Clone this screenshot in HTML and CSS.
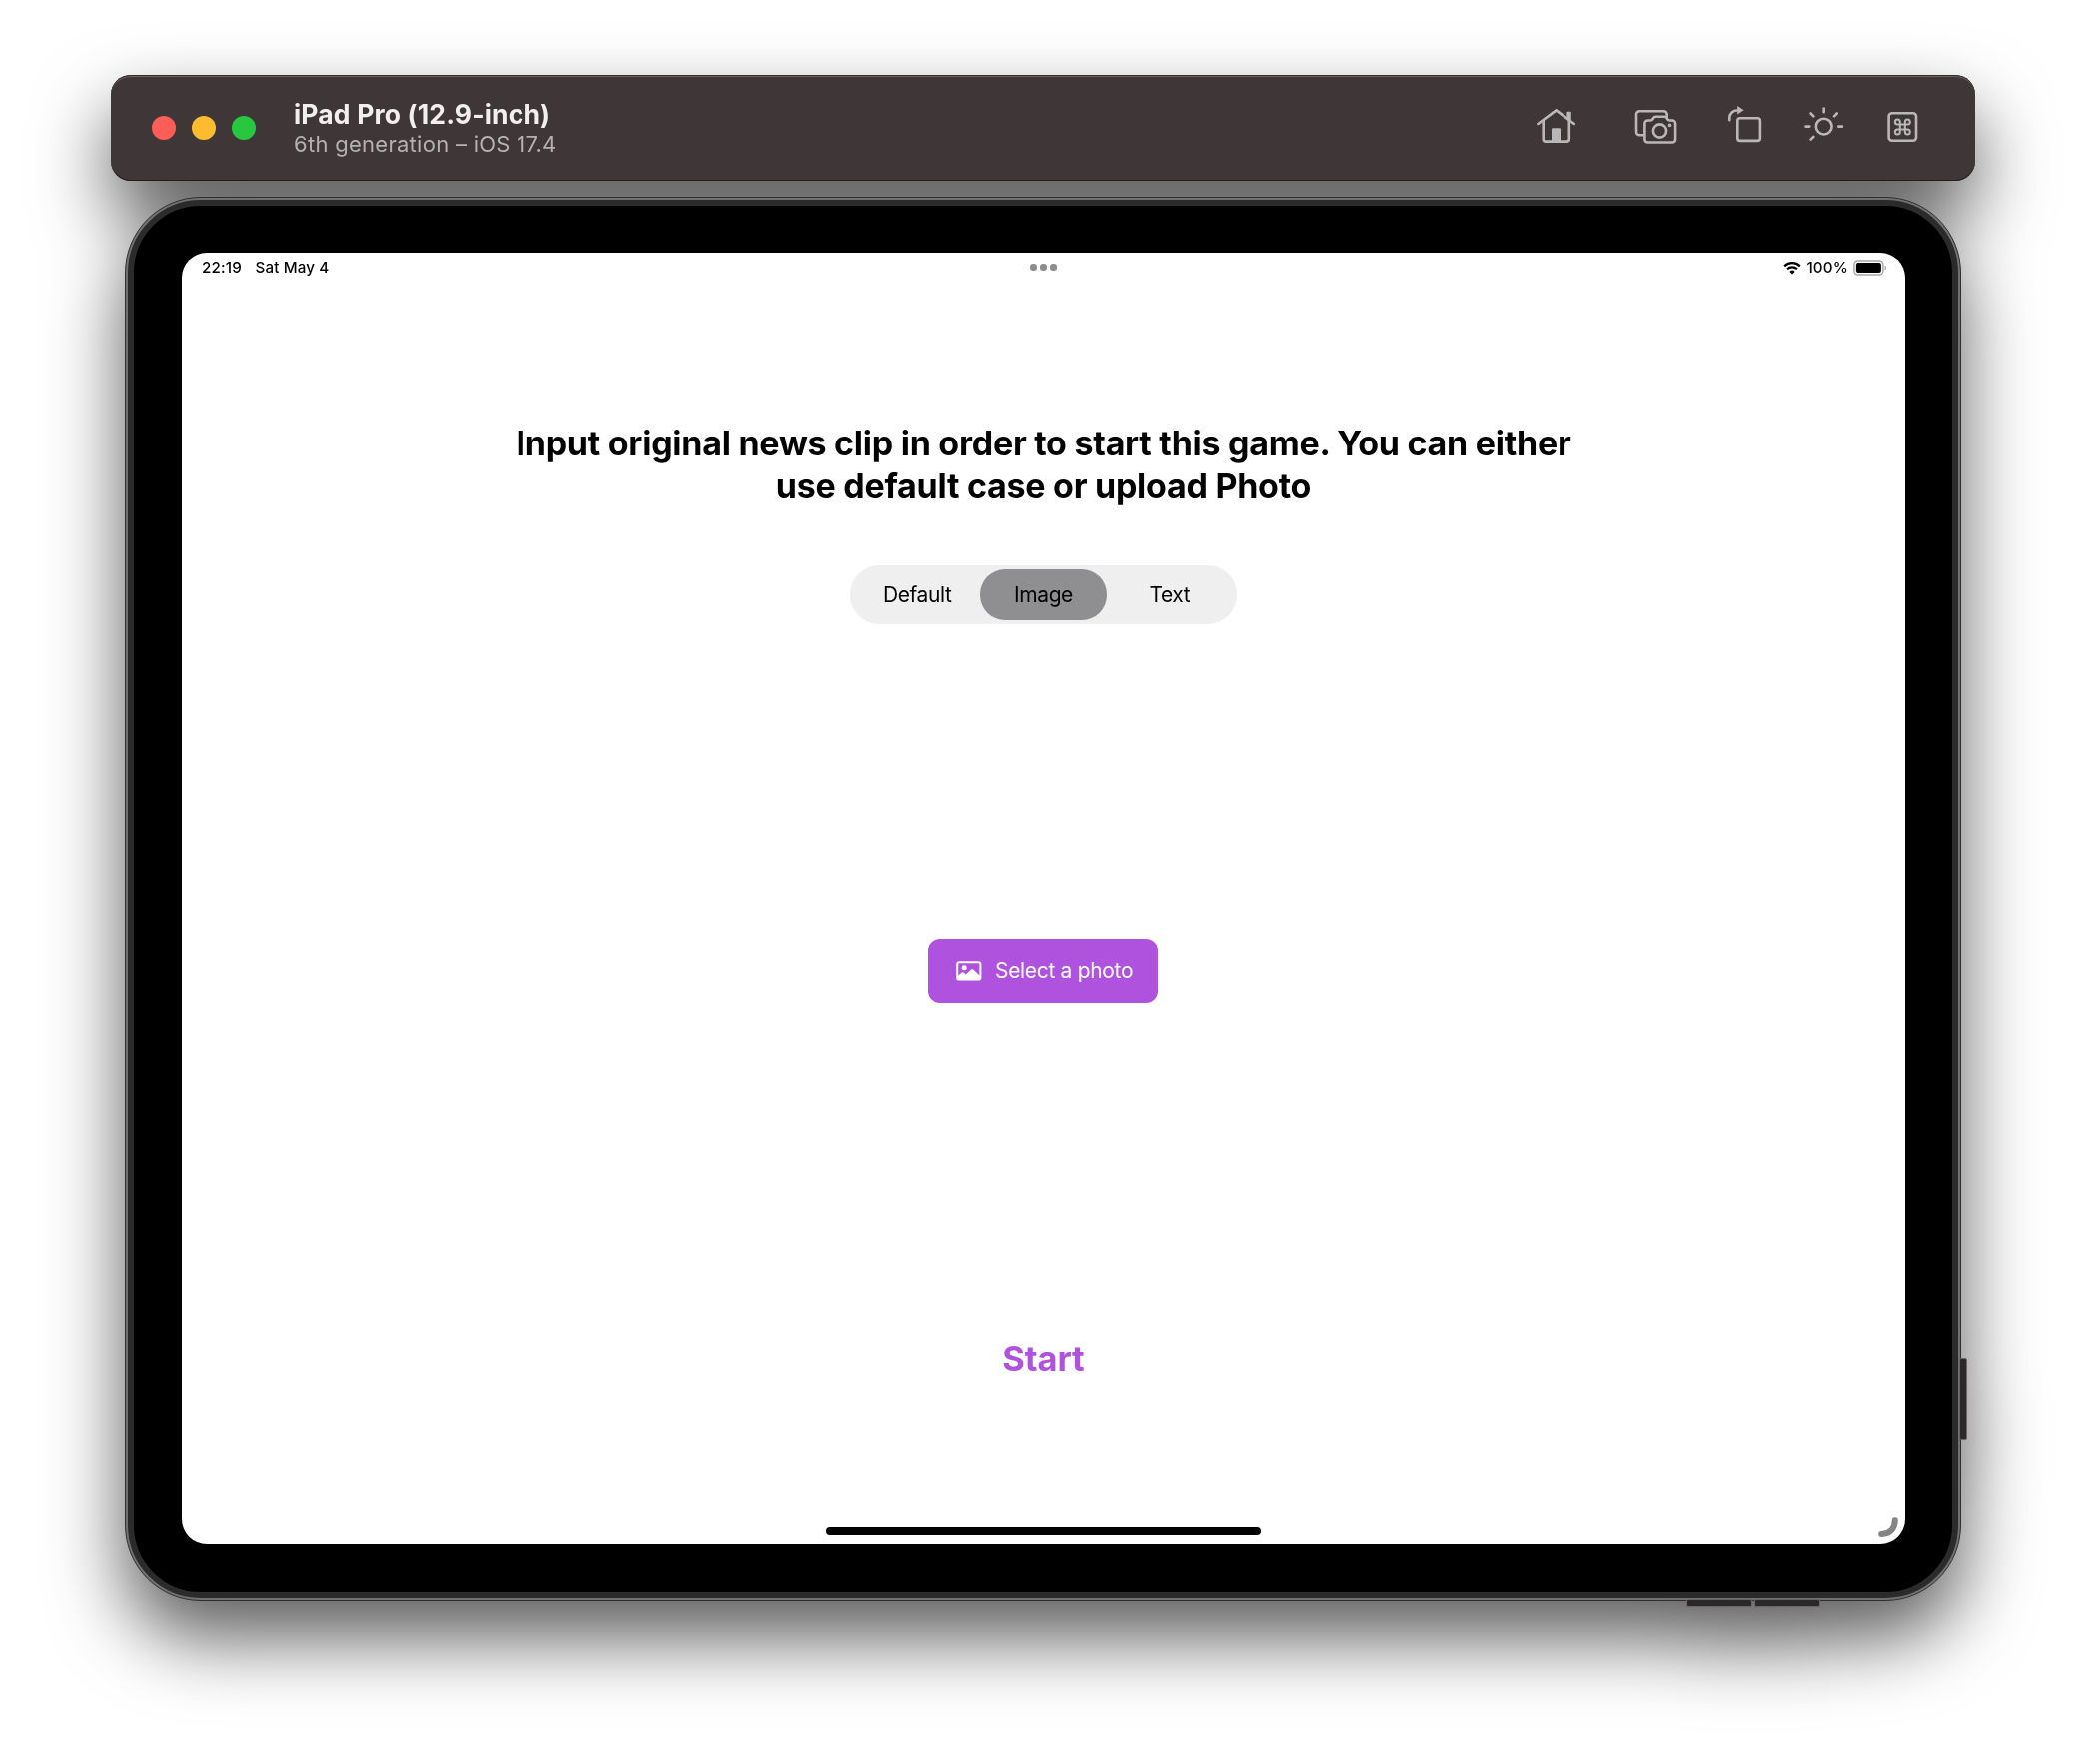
FILE: index.html
```html
<!DOCTYPE html>
<html lang="en">
<head>
<meta charset="utf-8">
<title>iPad Pro (12.9-inch)</title>
<link rel="stylesheet" href="styles.css">
</head>
<body>
<div class="simulator">
  <header class="toolbar">
    <div class="lights">
      <span class="light light-close"></span>
      <span class="light light-minimize"></span>
      <span class="light light-zoom"></span>
    </div>
    <div class="titles">
      <div class="title">iPad Pro (12.9-inch)</div>
      <div class="subtitle">6th generation – iOS 17.4</div>
    </div>
    <div class="actions">
      <svg class="icon icon-home" width="44" height="40" viewBox="0 0 44 40">
        <path d="M3.4 19 21.6 5.4 39.8 19" />
        <path d="M8.7 16v18.2a2.4 2.4 0 0 0 2.4 2.4h21.3a2.4 2.4 0 0 0 2.4-2.4V16" />
        <path class="solid" d="M17 24.2a1 1 0 0 1 1-1h7a1 1 0 0 1 1 1V37h-9zM32.4 7.7a.9.9 0 0 1 .9-.9h2.6a.9.9 0 0 1 .9.9V17l-4.4-3.3z" />
      </svg>
      <svg class="icon icon-camera" width="48" height="40" viewBox="0 0 48 40">
        <path d="M11 30.2H7.2a3.2 3.2 0 0 1-3.2-3.2V9.4A3.2 3.2 0 0 1 7.2 6.2h24.3a3.2 3.2 0 0 1 3.2 3.2v2.3" />
        <path d="M15.4 15.500h3c1 0 1.500-.4 2-1.200l.8-1.300c.5-.8 1-1.200 2-1.200h9.300c1 0 1.500.4 2 1.200l.8 1.300c.5.8 1 1.200 2 1.200h2.800a3 3 0 0 1 3 3v16a3 3 0 0 1-3 3H15.400a3 3 0 0 1-3-3v-16a3 3 0 0 1 3-3z" />
        <circle cx="27.500" cy="26" r="6.600" />
        <circle class="solid" cx="37.500" cy="20.400" r="1.800" />
      </svg>
      <svg class="icon icon-rotate" width="38" height="40" viewBox="0 0 38 40">
        <rect x="11.300" y="13.300" width="22.600" height="22.600" rx="2.600" />
        <path d="M3.300 15.200V13.500c0-5 3.300-8.200 8.500-8.200" />
        <path class="solid" d="M11.200 1 17.600 5.300 11.200 9.600z" />
      </svg>
      <svg class="icon icon-sun" width="44" height="40" viewBox="0 0 44 40">
        <circle cx="21.700" cy="21.600" r="7.900" />
        <path d="M21.700 3.500v3.800M3.500 21.600h3.800M36.200 21.600H40M8.600 8.500l2.800 2.800M34.800 8.500l-2.800 2.800M8.600 34.700l2.800-2.800" />
      </svg>
      <svg class="icon icon-command" width="36" height="40" viewBox="0 0 36 40">
        <rect x="4.600" y="8.300" width="27.400" height="27.400" rx="3.200" />
        <path class="fine" d="M20.800 17v10a2.500 2.500 0 1 0 2.500-2.500h-10a2.500 2.500 0 1 0 2.500 2.500V17a2.500 2.500 0 1 0-2.500 2.500h10a2.500 2.500 0 1 0-2.500-2.500z" />
      </svg>
    </div>
  </header>

  <div class="device">
    <span class="hw hw-power"></span>
    <span class="hw hw-volume-up"></span>
    <span class="hw hw-volume-down"></span>
    <div class="bezel">
      <main class="screen">
        <div class="status">
          <div class="status-left">
            <span class="clock">22:19</span>
            <span class="date">Sat May 4</span>
          </div>
          <div class="dots"><i></i><i></i><i></i></div>
          <div class="status-right">
            <svg class="wifi" width="18" height="14" viewBox="0 0 18 14">
              <path d="M1.200 5.300a11.200 11.200 0 0 1 15.600 0M4.100 8.300a7 7 0 0 1 9.800 0" />
              <path class="wifi-dot" d="M9 13.600 6.300 10.900a3.900 3.900 0 0 1 5.400 0z" />
            </svg>
            <span class="percent">100%</span>
            <svg class="battery" width="34" height="16" viewBox="0 0 34 16">
              <rect class="battery-case" x=".9" y=".9" width="29" height="14.200" rx="4" />
              <rect x="2.900" y="2.900" width="25" height="10.200" rx="2" />
              <path class="battery-tip" d="M31.600 5.400c1.900.7 1.900 4.500 0 5.200z" />
            </svg>
          </div>
        </div>

        <h1 class="headline">Input original news clip in order to start this game. You can either<br>use default case or upload Photo</h1>

        <div class="segments">
          <span class="segment">Default</span>
          <span class="segment segment-on">Image</span>
          <span class="segment">Text</span>
        </div>

        <button class="picker">
          <svg width="26" height="20" viewBox="0 0 26 20">
            <rect class="frame" x="1.200" y="1.200" width="23.200" height="17.400" rx="2.200" />
            <circle cx="8.200" cy="6.800" r="2.500" />
            <path d="M2 14.800 5.700 11.500c.6-.5 1.200-.5 1.800 0l2.300 2 5.300-4.900c.7-.6 1.400-.6 2.100 0L24 15v3.200H2z" />
          </svg>
          <span>Select a photo</span>
        </button>

        <div class="start">Start</div>
        <div class="home-bar"></div>
        <svg class="corner" width="22" height="22" viewBox="0 0 22 22">
          <path d="M16.800 3.200C16.600 11.500 12 16.600 3.200 16.900" />
        </svg>
      </main>
    </div>
  </div>
</div>
</body>
</html>
```
FILE: styles.css
```css
* {
  box-sizing: border-box;
}

body {
  margin: 0;
  background: #fff;
  font-family: Inter, "Liberation Sans", sans-serif;
  color: #000;
}

.simulator {
  display: flex;
  flex-direction: column;
  align-items: center;
  gap: 16px;
  height: 1766px;
  padding-top: 75px;
  overflow: hidden;
  filter: drop-shadow(0 37px 38px rgba(0, 0, 0, 0.64));
}

/* Simulator title bar */
.toolbar {
  display: flex;
  align-items: center;
  flex: none;
  width: 1866px;
  height: 106px;
  padding: 0 55px 0 41px;
  border-radius: 20px;
  background: #3f3637;
  box-shadow: inset 0 1px 0 #2f2d2d, inset 0 3px 0 -1px #686464, inset 0 -1px 0 #201c1d;
}

.lights {
  display: flex;
  gap: 16px;
}

.light {
  width: 24px;
  height: 24px;
  border-radius: 50%;
}

.light-close { background: #ff5d57; }
.light-minimize { background: #febb2e; }
.light-zoom { background: #28c740; }

.titles {
  margin-left: 38px;
  padding-top: 2px;
  white-space: nowrap;
}

.title {
  height: 30px;
  line-height: 28px;
  font-size: 26.5px;
  font-weight: 700;
  letter-spacing: 0.15px;
  color: #f1eff0;
}

.subtitle {
  height: 28px;
  line-height: 28px;
  font-size: 22px;
  letter-spacing: 0.28px;
  color: #b5b0b1;
}

.actions {
  display: flex;
  margin: 0 0 6px auto;
}

.icon {
  fill: none;
  stroke: #bbb7b8;
  stroke-width: 2.6;
  stroke-linecap: round;
  stroke-linejoin: round;
}

.icon .solid {
  fill: #bbb7b8;
  stroke: none;
}

.icon .fine { stroke-width: 2; }

.icon-camera { margin-left: 54px; }
.icon-rotate { margin-left: 46px; }
.icon-sun { margin-left: 38px; }
.icon-command { margin-left: 38px; }

/* Tablet body */
.device {
  position: relative;
  flex: none;
  width: 1838px;
  height: 1406px;
  padding: 2px;
  border: 1px solid #303030;
  border-radius: 76px;
  background: #707070;
}

.bezel {
  height: 100%;
  padding: 47px 47px 47px 48px;
  border: 6px solid #2b2b2b;
  border-radius: 73px;
  background: #000;
}

.hw {
  position: absolute;
  border: 1px solid #6a6667;
  background: #2b2829;
  border-radius: 2px;
}

.hw-power { left: 1835px; top: 1162px; width: 8px; height: 82px; }
.hw-volume-up { left: 1562px; top: 1403px; width: 66px; height: 8px; }
.hw-volume-down { left: 1630px; top: 1403px; width: 66px; height: 8px; }

.screen {
  position: relative;
  display: flex;
  flex-direction: column;
  align-items: center;
  width: 1725px;
  height: 1293px;
  border-radius: 25px;
  background: #fff;
}

.status {
  display: grid;
  grid-template-columns: 1fr auto 1fr;
  align-items: center;
  width: 100%;
  height: 30px;
  padding: 0 18px 1px 20px;
  font-size: 15.2px;
  font-weight: 500;
  line-height: 29px;
  letter-spacing: 0.15px;
}

.status-left {
  display: flex;
  gap: 13.5px;
}

.dots {
  display: flex;
  gap: 3.5px;
  margin-right: 2px;
}

.dots i {
  width: 6.5px;
  height: 6.5px;
  border-radius: 50%;
  background: #8d8d8d;
}

.status-right {
  display: flex;
  justify-content: flex-end;
  align-items: center;
}

.wifi {
  fill: none;
  stroke: #000;
  stroke-width: 2.3;
  margin-right: 5px;
}

.wifi-dot {
  fill: #000;
  stroke: none;
}

.battery { margin-left: 5px; }
.battery-case { fill: none; stroke: #aaa5a6; stroke-width: 1.5; }
.battery-tip { fill: #aaa5a6; }

.headline {
  margin: 139px 0 0;
  font-size: 34px;
  line-height: 43px;
  font-weight: 700;
  text-align: center;
  white-space: nowrap;
  letter-spacing: -0.26px;
}

.segments {
  display: flex;
  flex: none;
  width: 387px;
  height: 59px;
  margin-top: 58px;
  padding: 4px;
  border-radius: 29px;
  background: #efefef;
}

.segment {
  flex: 1;
  border-radius: 25px;
  font-size: 21px;
  line-height: 52px;
  text-align: center;
  letter-spacing: -0.4px;
}

.segment-on { background: #8f8f91; }

.picker {
  display: flex;
  align-items: center;
  flex: none;
  gap: 13px;
  width: 230px;
  height: 64px;
  margin: 315px 1px 0 0;
  padding: 0 0 1px 28px;
  border: 0;
  border-radius: 12px;
  background: #af52de;
  color: #fff;
  font: 400 21px Inter, "Liberation Sans", sans-serif;
  letter-spacing: -0.32px;
  white-space: nowrap;
}

.picker svg { fill: #fff; }
.picker .frame { fill: none; stroke: #fff; stroke-width: 2; }

.start {
  margin-top: 335px;
  font-size: 34.5px;
  line-height: 44px;
  font-weight: 700;
  letter-spacing: -0.1px;
  color: #af52de;
}

.home-bar {
  width: 435px;
  height: 8px;
  margin: auto 0 9px;
  border-radius: 4px;
  background: #000;
}

.corner {
  position: absolute;
  right: 5px;
  bottom: 5px;
  fill: none;
  stroke: #858585;
  stroke-width: 6;
  stroke-linecap: round;
}
```
